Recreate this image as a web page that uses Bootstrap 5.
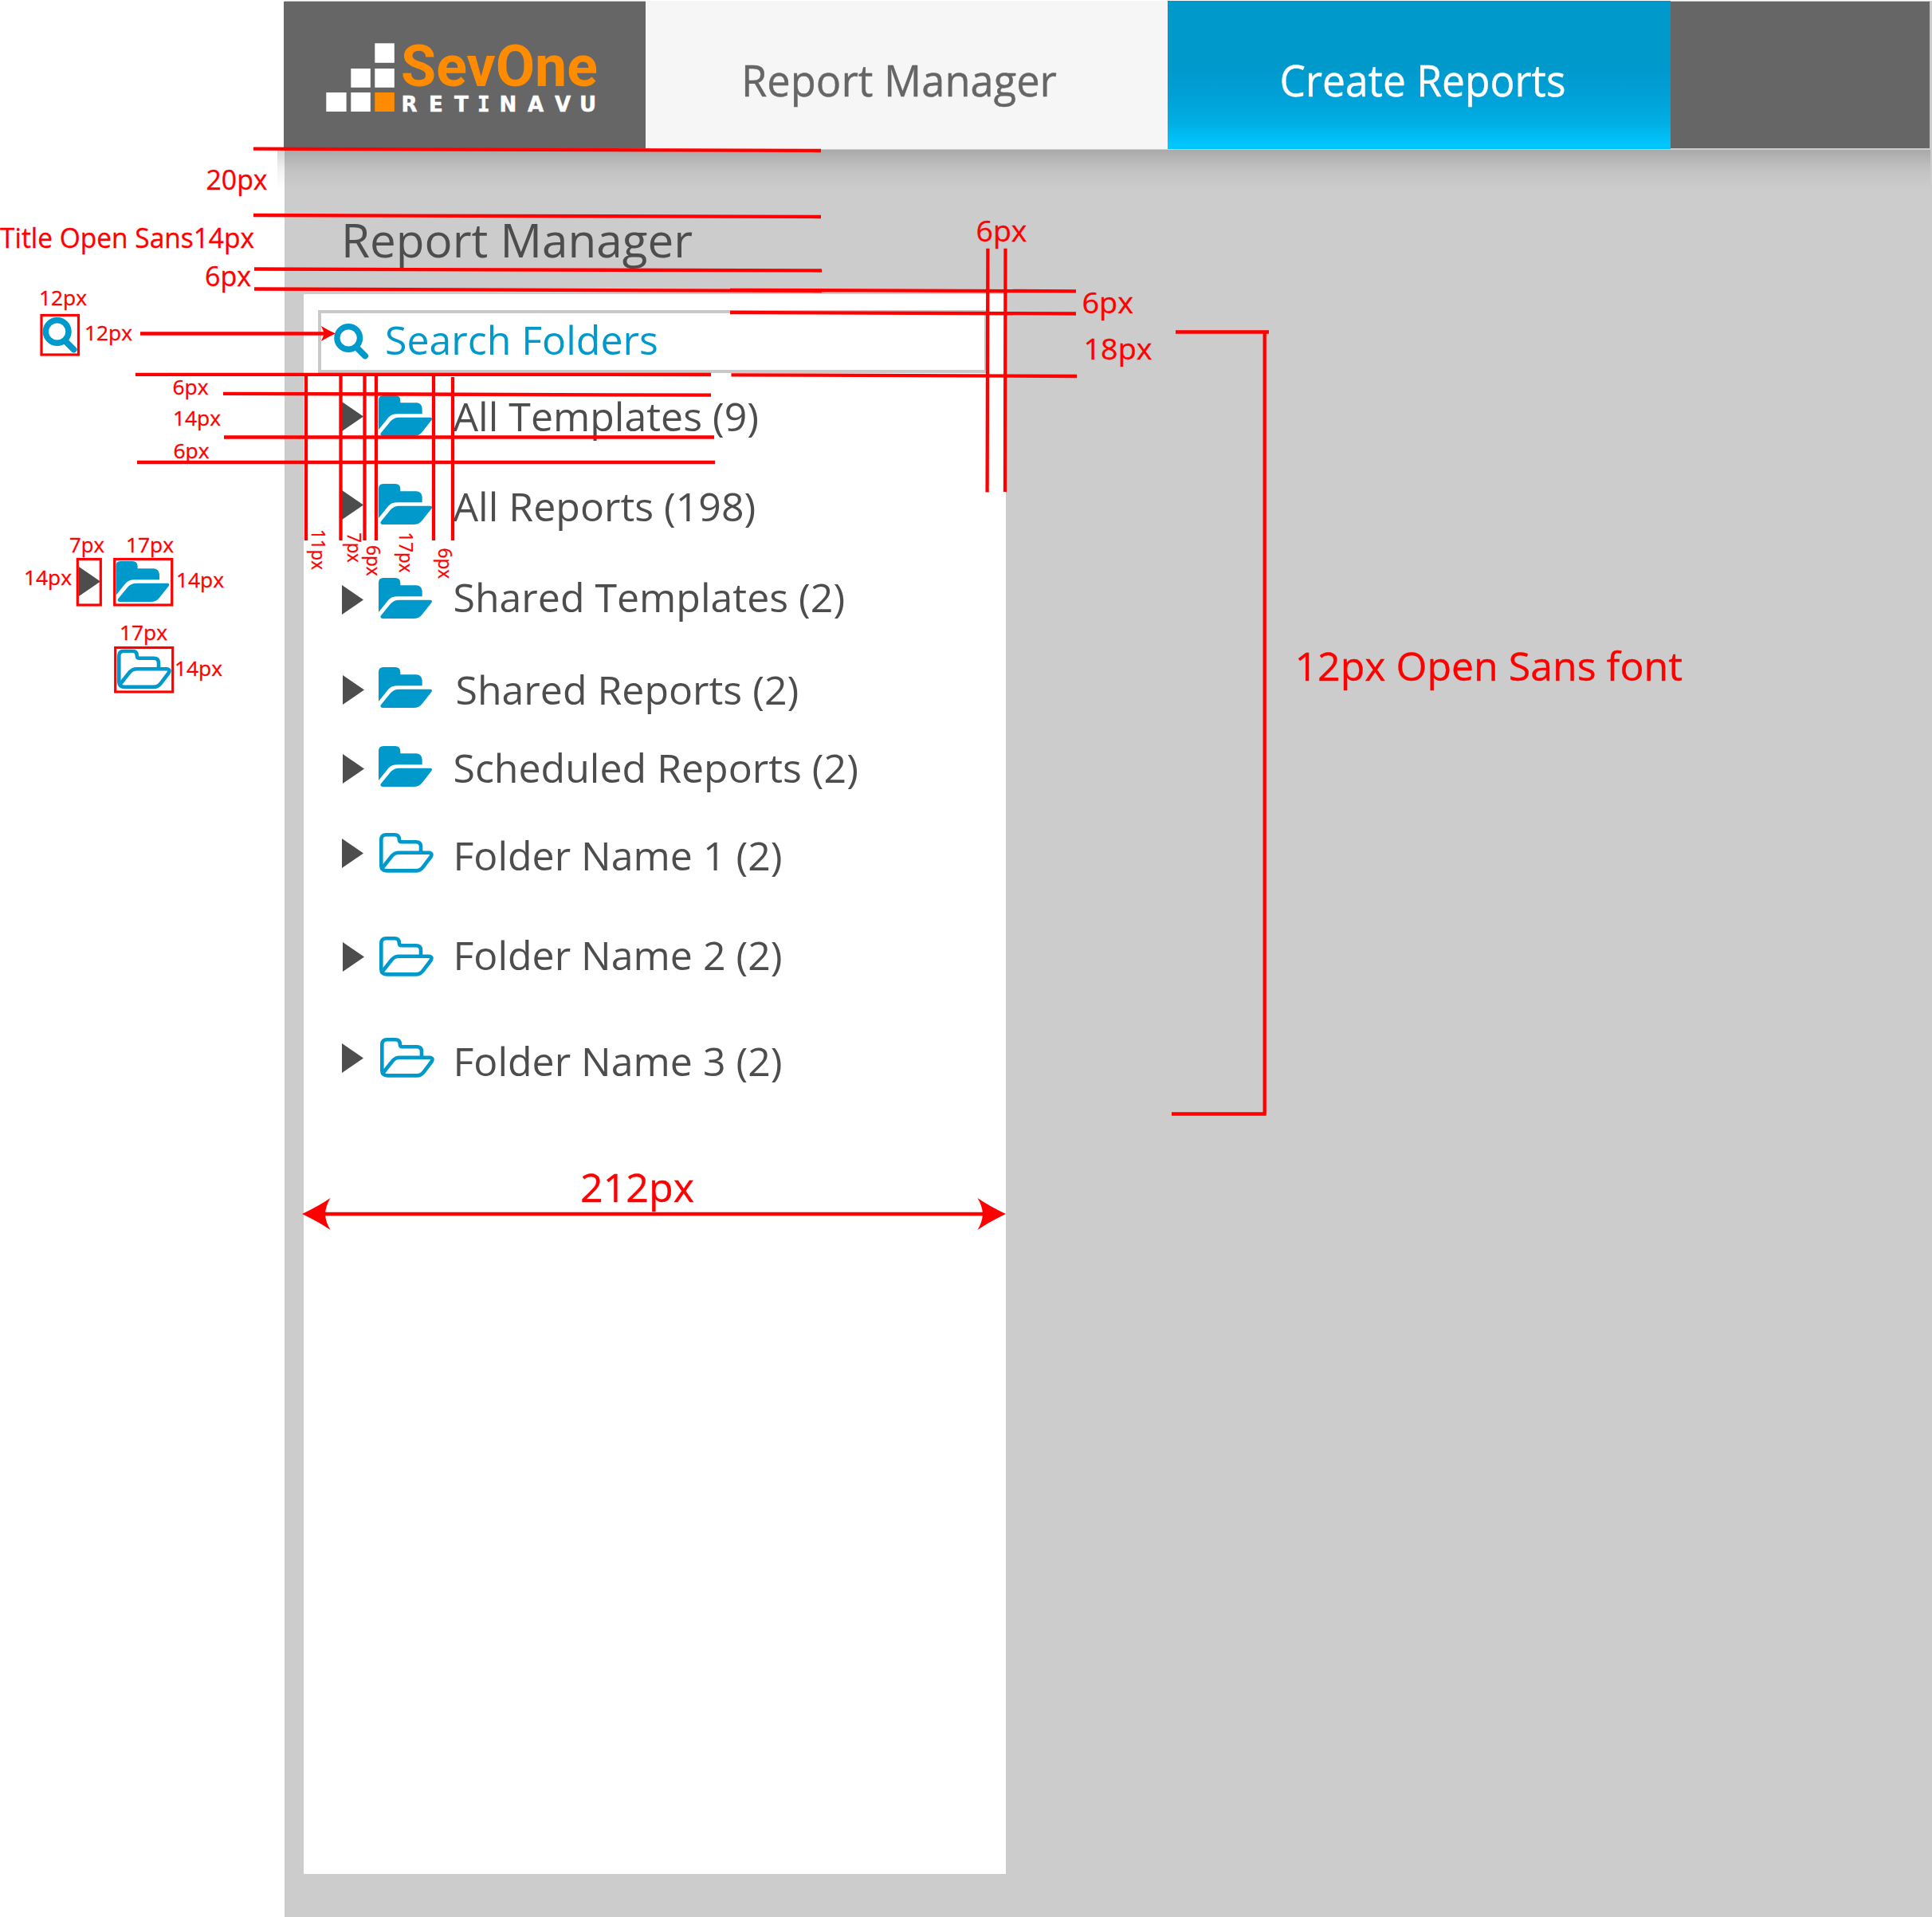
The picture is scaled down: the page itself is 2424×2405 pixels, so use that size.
<!DOCTYPE html>
<html lang="en">
<head>
<meta charset="utf-8">
<meta name="viewport" content="width=device-width, initial-scale=1">
<title>SevOne RetinaVu - Report Manager spec</title>
<link href="https://cdn.jsdelivr.net/npm/bootstrap@5.3.0/dist/css/bootstrap.min.css" rel="stylesheet">
<style>
  body { font-family: "Open Sans", "Noto Sans", sans-serif; background: #fff; color: #4d4d4d; }
  .sheet { width: 2424px; height: 2405px; padding-left: 357px; }
  .workspace { height: 2405px; background: #ccc; }
  .topbar { height: 188px; margin-left: -1px; border-top: 1px solid #fff; }
  .brand-cell { width: 454px; height: 184px; margin-top: 1px; background: #666; }
  .tab-cell { height: 186px; }
  .tab-cell text { stroke-width: .4; }
  .tab-current { width: 654.5px; background: #f6f6f6; }
  .tab-create { width: 631px; background: linear-gradient(#09c 0, #09c 45%, #00a1d8 65%, #00afe3 82%, #00c8ff 98%); }
  .fill-cell { width: 325px; height: 184px; margin-top: 1px; background: #666; }
  .topbar-shadow { height: 50px; margin-left: -9px; margin-right: 2px; background: linear-gradient(rgba(0,0,0,.17), rgba(0,0,0,.05) 48%, rgba(0,0,0,0)); }
  .page-title { font-size: 58.4px; line-height: 70px; margin: 28px 0 0 71px; height: 102.5px; color: #4d4d4d; white-space: nowrap; }
  .side-panel { width: 880.5px; height: 1982.5px; margin-left: 24px; padding: 20px 23px 0 18px; background: #fff; }
  .search-box { height: 79px; border: 4px solid #c9c9c9; padding-left: 16px; color: #09c; font-size: 50px; line-height: 60px; }
  .search-box svg { width: 44px; height: 45px; margin-top: 13.5px; }
  .search-box span { margin: 3px 0 0 20px; white-space: nowrap; }
  .folder-list { padding-left: 29.5px; }
  .folder-row { height: 60px; font-size: 50px; line-height: 60px; white-space: nowrap; margin-top: var(--gap); }
  .folder-row .twisty { width: 28px; height: 37px; margin: var(--ty) 0 0 var(--tx, 0px); }
  .folder-row .folder { width: 68px; height: 51px; margin: var(--fy) 0 0 var(--fx, 18px); }
  .folder-row span { margin: .5px 0 0 var(--lx, 26px); }
  .folder-row:nth-child(1) { --gap: 23.5px; --ty: 12.5px; --fy: 5px; }
  .folder-row:nth-child(2) { --gap: 53.5px; --ty: 10.5px; --fy: 2.5px; }
  .folder-row:nth-child(3) { --gap: 54.2px; --ty: 15.7px; --fy: 6.7px; }
  .folder-row:nth-child(4) { --gap: 55.6px; --ty: 12.7px; --tx: 1px; --fy: 3px; --fx: 17px; --lx: 29px; }
  .folder-row:nth-child(5) { --gap: 38px; --ty: 13.7px; --tx: 1px; --fy: 4px; --fx: 17px; }
  .folder-row:nth-child(6) { --gap: 50.3px; --ty: 9.2px; --fy: 2.5px; --fx: 19px; --lx: 25px; }
  .folder-row:nth-child(7) { --gap: 65px; --ty: 14.2px; --tx: 1px; --fy: 7.7px; --fx: 18px; --lx: 25px; }
  .folder-row:nth-child(8) { --gap: 73.3px; --ty: 8.4px; --fy: 1.4px; --fx: 20px; --lx: 24px; }
  .redlines { pointer-events: none; fill: red; }
  .redlines text { stroke: red; stroke-width: .35; }
  .redlines .rule-lines { stroke: red; stroke-width: 4.3; fill: none; }
  .redlines .boxes { stroke: red; stroke-width: 3.2; fill: none; }
</style>
</head>
<body>
<svg width="0" height="0" class="position-absolute" aria-hidden="true">
  <symbol id="ic-search" viewBox="0 0 44 45">
    <circle cx="18.2" cy="18" r="14.3" fill="none" stroke="#09c" stroke-width="7.4"/>
    <path d="M28.5 30 L39 40.5" stroke="#09c" stroke-width="8" stroke-linecap="round"/>
  </symbol>
  <symbol id="ic-twisty" viewBox="0 0 28 37"><path d="M0 0 L27 18.5 L0 37 Z" fill="#4d4d4d"/></symbol>
  <symbol id="ic-folder" viewBox="0 0 68 51">
    <path fill="#09c" d="M0 43 V6 Q0 0 6 0 H21 Q27 0 27.3 6 V9.3 H47 Q54 9.5 54.7 16.5 V23.2 H24 Q16 23.2 12.5 27.5 Z"/>
    <path fill="#09c" d="M2.7 47.5 L15 32.5 Q19 27.7 26 27.7 H65 Q68 28 66.5 31 L55 45.5 Q51 51 44 51 H4.7 Q1.5 50.5 2.7 47.5 Z"/>
  </symbol>
  <symbol id="ic-folder-open" viewBox="0 0 68 51">
    <g fill="none" stroke="#09c" stroke-width="4.6" stroke-linejoin="round">
      <path d="M2.3 42 V8.5 Q2.3 2.3 8.5 2.3 H19 Q24.8 2.3 24.8 8 Q24.8 11.2 28 11.2 H46 Q52 11.2 52 17.2 V24.5"/>
      <path d="M4 43.5 L15.5 29 Q19 24.7 24.5 24.7 H62 Q67.3 25.2 64.4 30 L54.3 43.3 Q51 47.4 46 47.4 H9 Q2.3 47.4 2.3 40.5"/>
    </g>
  </symbol>
</svg>

<div class="sheet position-relative overflow-hidden">
  <div class="workspace">
    <header class="topbar d-flex align-items-start">
      <div class="brand-cell">
        <svg width="454" height="184" viewBox="356 2 454 184">
          <g fill="#fff">
            <rect x="470.3" y="54.3" width="24.5" height="24.5"/>
            <rect x="440.3" y="86" width="24.5" height="23.8"/><rect x="470.3" y="86" width="24.5" height="23.8"/>
            <rect x="409.3" y="116" width="25.3" height="24"/><rect x="440.3" y="116" width="24.5" height="24"/>
          </g>
          <rect x="470.3" y="116" width="24.5" height="24" fill="#ff8c00"/>
          <text x="503" y="108" font-family="Roboto, sans-serif" font-weight="700" font-size="73" fill="#ff8c00" textLength="247" lengthAdjust="spacingAndGlyphs">SevOne</text>
          <text y="139.5" x="503.6 538 570 599 626.6 662 696 727" font-family="DejaVu Sans, sans-serif" font-weight="700" font-size="26" fill="#fff" stroke="#fff" stroke-width=".5">RET<tspan font-family="DejaVu Sans Mono, monospace">I</tspan>NAVU</text>
        </svg>
      </div>
      <div class="tab-cell tab-current">
        <svg width="654" height="186" viewBox="810 1 654 186"><text x="930" y="120.5" font-size="54.5" fill="#666" stroke="#666" textLength="396" lengthAdjust="spacingAndGlyphs">Report Manager</text></svg>
      </div>
      <div class="tab-cell tab-create">
        <svg width="631" height="186" viewBox="1464.5 1 631 186"><text x="1605" y="120.5" font-size="54.5" fill="#fff" stroke="#fff" textLength="359" lengthAdjust="spacingAndGlyphs">Create Reports</text></svg>
      </div>
      <div class="fill-cell"></div>
    </header>
    <div class="topbar-shadow"></div>
    <h1 class="page-title fw-normal">Report Manager</h1>
    <aside class="side-panel">
      <div class="search-box d-flex align-items-start">
        <svg><use href="#ic-search"/></svg><span>Search Folders</span>
      </div>
      <ul class="folder-list list-unstyled mb-0">
        <li class="folder-row d-flex align-items-start"><svg class="twisty"><use href="#ic-twisty"/></svg><svg class="folder"><use href="#ic-folder"/></svg><span>All Templates (9)</span></li>
        <li class="folder-row d-flex align-items-start"><svg class="twisty"><use href="#ic-twisty"/></svg><svg class="folder"><use href="#ic-folder"/></svg><span>All Reports (198)</span></li>
        <li class="folder-row d-flex align-items-start"><svg class="twisty"><use href="#ic-twisty"/></svg><svg class="folder"><use href="#ic-folder"/></svg><span>Shared Templates (2)</span></li>
        <li class="folder-row d-flex align-items-start"><svg class="twisty"><use href="#ic-twisty"/></svg><svg class="folder"><use href="#ic-folder"/></svg><span>Shared Reports (2)</span></li>
        <li class="folder-row d-flex align-items-start"><svg class="twisty"><use href="#ic-twisty"/></svg><svg class="folder"><use href="#ic-folder"/></svg><span>Scheduled Reports (2)</span></li>
        <li class="folder-row d-flex align-items-start"><svg class="twisty"><use href="#ic-twisty"/></svg><svg class="folder"><use href="#ic-folder-open"/></svg><span>Folder Name 1 (2)</span></li>
        <li class="folder-row d-flex align-items-start"><svg class="twisty"><use href="#ic-twisty"/></svg><svg class="folder"><use href="#ic-folder-open"/></svg><span>Folder Name 2 (2)</span></li>
        <li class="folder-row d-flex align-items-start"><svg class="twisty"><use href="#ic-twisty"/></svg><svg class="folder"><use href="#ic-folder-open"/></svg><span>Folder Name 3 (2)</span></li>
      </ul>
    </aside>
  </div>

  <!-- Measurement annotations laid over the interface -->
  <svg class="redlines position-absolute top-0 start-0" width="2424" height="2405" viewBox="0 0 2424 2405">
    <g class="rule-lines">
      <path d="M318 186.7 L1030 189 M318 270 L1030 272 M319 337.5 L1031 339.5 M319 362.5 L1031 365 M916 363.8 L1350 365.3 M916 392 L1350 393.5 M917.5 470.3 L1351 472"/>
      <path d="M170 469.8 L892 470 M280 493.8 L892 495.7 M281 548.5 H896 M172 580 H897"/>
      <path d="M384 471 V678 M427.5 471 V678 M457.5 471 V678 M472 471 V678 M544 471 V678 M568 473 V678"/>
      <path d="M1239.4 311.7 L1238.6 617.5 M1261.5 311.7 L1261 617"/>
      <path d="M1475 416.5 H1592 M1586.7 417 V1397.5 M1470 1397.5 H1588.7"/>
      <path d="M400 1523 H1242 M176 418.5 H408"/>
    </g>
    <path d="M379 1523 Q400 1513 414.500 1503 Q408.500 1513 408 1523 Q408.500 1533 414.500 1543 Q400 1533 379 1523 Z M1262 1523 Q1241 1513 1226.500 1503 Q1232.500 1513 1233 1523 Q1232.500 1533 1226.500 1543 Q1241 1533 1262 1523 Z"/>
    <path d="M421 418.500 Q411 414 403 409 L407 418.500 L403 428 Q411 423 421 418.500 Z"/>
    <use href="#ic-search" x="53.500" y="398" width="44" height="45"/>
    <use href="#ic-twisty" x="99" y="711" width="28" height="37"/>
    <use href="#ic-folder" x="145.300" y="704" width="68" height="51"/>
    <use href="#ic-folder-open" x="147" y="814.500" width="68" height="51"/>
    <g class="boxes">
      <rect x="52" y="395.500" width="46.500" height="49.500"/>
      <rect x="97.300" y="701.500" width="29" height="57.500"/>
      <rect x="143.700" y="701.500" width="72" height="57.500"/>
      <rect x="144.700" y="812.500" width="72" height="55.500"/>
    </g>
    <g font-size="34">
      <text x="258.500" y="237.600" textLength="77" lengthAdjust="spacingAndGlyphs">20px</text>
      <text x="0" y="311.200" textLength="319" lengthAdjust="spacingAndGlyphs">Title Open Sans14px</text>
      <text x="257" y="359" textLength="58" lengthAdjust="spacingAndGlyphs">6px</text>
    </g>
    <g font-size="26">
      <text x="49" y="383" textLength="60" lengthAdjust="spacingAndGlyphs">12px</text>
      <text x="106" y="426.700" textLength="60" lengthAdjust="spacingAndGlyphs">12px</text>
      <text x="216.500" y="494.500" textLength="45" lengthAdjust="spacingAndGlyphs">6px</text>
      <text x="217" y="534" textLength="60" lengthAdjust="spacingAndGlyphs">14px</text>
      <text x="217.500" y="575" textLength="45" lengthAdjust="spacingAndGlyphs">6px</text>
      <text x="87" y="693.300" textLength="44" lengthAdjust="spacingAndGlyphs">7px</text>
      <text x="158" y="692.500" textLength="60" lengthAdjust="spacingAndGlyphs">17px</text>
      <text x="30" y="734" textLength="60" lengthAdjust="spacingAndGlyphs">14px</text>
      <text x="221" y="737" textLength="60" lengthAdjust="spacingAndGlyphs">14px</text>
      <text x="150" y="803" textLength="60" lengthAdjust="spacingAndGlyphs">17px</text>
      <text x="219" y="848" textLength="60" lengthAdjust="spacingAndGlyphs">14px</text>
    </g>
    <g font-size="23">
      <text transform="translate(391 664) rotate(90)" textLength="51" lengthAdjust="spacingAndGlyphs">11px</text>
      <text transform="translate(435.500 668.500) rotate(90)" textLength="37" lengthAdjust="spacingAndGlyphs">7px</text>
      <text transform="translate(460 684) rotate(90)" textLength="38.500" lengthAdjust="spacingAndGlyphs">6px</text>
      <text transform="translate(500.500 667.500) rotate(90)" textLength="51" lengthAdjust="spacingAndGlyphs">17px</text>
      <text transform="translate(549.500 687.500) rotate(90)" textLength="38.500" lengthAdjust="spacingAndGlyphs">6px</text>
    </g>
    <g font-size="37">
      <text x="1224.500" y="302.600" textLength="64" lengthAdjust="spacingAndGlyphs">6px</text>
      <text x="1357.500" y="392.800" textLength="64.500" lengthAdjust="spacingAndGlyphs">6px</text>
      <text x="1359.500" y="450.700" textLength="86" lengthAdjust="spacingAndGlyphs">18px</text>
    </g>
    <g font-size="50">
      <text x="728" y="1507.700" textLength="143" lengthAdjust="spacingAndGlyphs">212px</text>
      <text x="1624.500" y="854" textLength="486.500" lengthAdjust="spacingAndGlyphs">12px Open Sans font</text>
    </g>
  </svg>
</div>
<script src="https://cdn.jsdelivr.net/npm/bootstrap@5.3.0/dist/js/bootstrap.bundle.min.js"></script>
</body>
</html>
